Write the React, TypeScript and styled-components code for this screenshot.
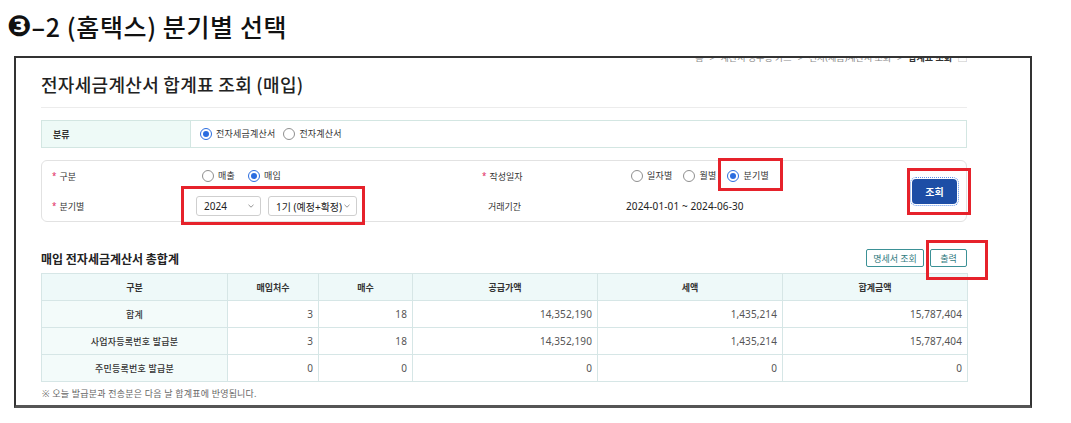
import React from 'react';
import styled, { createGlobalStyle } from 'styled-components';

const GlobalStyle = createGlobalStyle`
  html, body { margin: 0; padding: 0; background: #fff; }
  body { font-family: "Noto Sans", "Noto Sans CJK KR", sans-serif; color: #333; }
  * { box-sizing: border-box; }
`;

const Page = styled.div`
  width: 1071px;
  height: 423px;
  overflow: hidden;
  background: #fff;
  padding-top: 10px;
`;

const Heading = styled.h1`
  margin: 0 0 0 7px;
  height: 32px;
  font-size: 25px;
  line-height: 32px;
  font-weight: 500;
  color: #111;
  font-family: "Noto Sans CJK KR", sans-serif;
  letter-spacing: 0.6px;
  white-space: nowrap;
`;

const Badge = styled.span`
  display: inline-block;
  font-family: "DejaVu Sans", sans-serif;
  font-weight: 700;
  font-size: 29px;
  line-height: 32px;
  vertical-align: top;
  letter-spacing: 0;
`;

const Dash = styled.span`
  font-weight: 700;
`;

const Frame = styled.div`
  position: relative;
  margin: 14px 0 0 14px;
  width: 1018px;
  height: 352px;
  border: 2px solid #333;
  border-bottom: 3px solid #555;
  padding: 0 63px 0 25px;
`;

const Breadcrumb = styled.div`
  height: 5px;
  overflow: hidden;
  display: flex;
  justify-content: flex-end;
  align-items: flex-end;
  font-size: 9px;
  line-height: 11px;
  color: #8a8a8a;
  white-space: nowrap;
`;

const Crumb = styled.span<{ $current?: boolean }>`
  font-weight: ${p => (p.$current ? 700 : 400)};
  color: ${p => (p.$current ? '#333' : '#8a8a8a')};
  margin-left: 6px;
`;

const TitleRow = styled.div`
  height: 45px;
  display: flex;
  align-items: center;
  border-bottom: 1px solid #ececec;
  padding-bottom: 2px;
`;

const PageTitle = styled.h2`
  margin: 0;
  font-size: 18px;
  font-weight: 500;
  color: #222;
  letter-spacing: 0.3px;
  font-family: "Noto Sans CJK KR", sans-serif;
`;

const CategoryBox = styled.div`
  margin-top: 12px;
  height: 28px;
  display: flex;
  border: 1px solid #d3e6e2;
`;

const CategoryLabel = styled.div`
  width: 149px;
  background: #eefaf7;
  border-right: 1px solid #d3e6e2;
  display: flex;
  align-items: center;
  padding-left: 11px;
  font-size: 9px;
  font-weight: 600;
  color: #333;
`;

const CategoryValue = styled.div`
  flex: 1;
  display: flex;
  align-items: center;
  padding-left: 9px;
  gap: 8px;
`;

const RadioItem = styled.span`
  display: inline-flex;
  align-items: center;
  gap: 4px;
  font-size: 9px;
  color: #333;
  line-height: 12px;
  letter-spacing: 0.2px;
`;

const RadioCircle = styled.span<{ $on?: boolean }>`
  width: 12px;
  height: 12px;
  border-radius: 50%;
  border: 1px solid ${p => (p.$on ? '#2b6de0' : '#8f8f8f')};
  background: #fff;
  display: inline-flex;
  align-items: center;
  justify-content: center;
  flex: none;
  &::after {
    content: '';
    width: 6px;
    height: 6px;
    border-radius: 50%;
    background: ${p => (p.$on ? '#2b6de0' : 'transparent')};
  }
`;

const FilterBox = styled.div`
  margin-top: 12px;
  height: 62px;
  display: flex;
  border: 1px solid #e2e2e2;
  border-radius: 6px;
  background: #fff;
`;

const FieldGrid = styled.div`
  flex: 1;
  display: grid;
  grid-template-columns: 154px 286px 144px 1fr;
  grid-auto-rows: 30px;
  align-items: center;
`;

const FieldLabel = styled.div<{ $indent?: number }>`
  display: flex;
  align-items: center;
  padding-left: ${p => p.$indent ?? 0}px;
  font-size: 9px;
  color: #333;
`;

const Star = styled.span`
  color: #e0245e;
  font-size: 8px;
  margin-right: 3px;
  line-height: 8px;
`;

const RadioGroup = styled.div<{ $pad: number; $gap: number }>`
  display: flex;
  align-items: center;
  padding-left: ${p => p.$pad}px;
  gap: ${p => p.$gap}px;
`;

const SelectGroup = styled.div`
  position: relative;
  display: inline-flex;
  gap: 7px;
  justify-self: start;
`;

const Select = styled.div<{ $w: number }>`
  width: ${p => p.$w}px;
  height: 20px;
  border: 1px solid #cfcfcf;
  border-radius: 3px;
  background: #fff;
  display: flex;
  align-items: center;
  justify-content: space-between;
  padding: 0 6px 0 7px;
  font-size: 10px;
  color: #222;
  white-space: nowrap;
`;

const Chevron = () => (
  <svg width="6" height="4" viewBox="0 0 6 4" fill="none">
    <path d="M0.5 0.8 L3 3.2 L5.5 0.8" stroke="#888" strokeWidth="0.9" />
  </svg>
);

const PeriodText = styled.div`
  font-size: 10px;
  color: #222;
  letter-spacing: 0.1px;
`;

const Mark = styled.span`
  position: relative;
  display: inline-flex;
`;

const Highlight = styled.span<{ $t: number; $r: number; $b: number; $l: number }>`
  position: absolute;
  top: ${p => p.$t}px;
  right: ${p => p.$r}px;
  bottom: ${p => p.$b}px;
  left: ${p => p.$l}px;
  border: 3px solid #e6222b;
  pointer-events: none;
`;

const SearchArea = styled.div`
  display: flex;
  align-items: center;
  padding-right: 9px;
`;

const SearchButton = styled.button`
  width: 45px;
  height: 25px;
  border: none;
  border-radius: 4px;
  background: #1d4ea6;
  color: #fff;
  font-size: 10px;
  font-weight: 700;
  font-family: "Noto Sans CJK KR", sans-serif;
  outline: 1px dotted #5f93ea;
  outline-offset: 1px;
  padding: 0;
`;

const SectionHeader = styled.div`
  margin-top: 26px;
  height: 20px;
  display: flex;
  align-items: center;
  justify-content: space-between;
`;

const SectionTitle = styled.h3`
  margin: 0;
  font-size: 12px;
  font-weight: 700;
  color: #222;
  font-family: "Noto Sans CJK KR", sans-serif;
`;

const ButtonRow = styled.div`
  display: flex;
  gap: 6px;
`;

const SmallButton = styled.button<{ $w: number }>`
  width: ${p => p.$w}px;
  height: 18px;
  border: 1px solid #3b9196;
  border-radius: 2px;
  background: #fff;
  color: #2f7b80;
  font-size: 9px;
  font-family: "Noto Sans CJK KR", sans-serif;
  padding: 0;
`;

const Table = styled.table`
  margin-top: 5px;
  width: 926px;
  border-collapse: collapse;
  table-layout: fixed;
`;

const Th = styled.th`
  height: 27px;
  border: 1px solid #d6e6e6;
  background: #eef9f9;
  font-size: 9px;
  font-weight: 600;
  color: #333;
  padding: 0;
`;

const Td = styled.td<{ $label?: boolean }>`
  height: 27px;
  border: 1px solid #d6e6e6;
  background: ${p => (p.$label ? '#f3fbfa' : '#fff')};
  text-align: ${p => (p.$label ? 'center' : 'right')};
  font-size: ${p => (p.$label ? '9px' : '10px')};
  font-weight: ${p => (p.$label ? 500 : 400)};
  color: ${p => (p.$label ? '#333' : '#555')};
  letter-spacing: ${p => (p.$label ? '0.2px' : '0.1px')};
  padding: 0 ${p => (p.$label ? 0 : 5)}px 0 0;
`;

const Footnote = styled.p`
  margin: 3px 0 0 1px;
  line-height: 18px;
  font-size: 9px;
  color: #666;
  letter-spacing: 0.2px;
`;

const crumbs = ['홈', '>', '계산서·영수증·카드', '>', '전자(세금)계산서 조회', '>'];

const rows = [
  { label: '합계', vals: ['3', '18', '14,352,190', '1,435,214', '15,787,404'] },
  { label: '사업자등록번호 발급분', vals: ['3', '18', '14,352,190', '1,435,214', '15,787,404'] },
  { label: '주민등록번호 발급분', vals: ['0', '0', '0', '0', '0'] },
];

const cols = [186, 91, 94, 185, 185, 185];

export default function App() {
  return (
    <>
      <GlobalStyle />
      <Page>
        <Heading>
          <Badge>❸</Badge>
          <Dash>–</Dash>2 (홈택스) 분기별 선택
        </Heading>
        <Frame>
          <Breadcrumb>
            {crumbs.map((c, i) => (
              <Crumb key={i}>{c}</Crumb>
            ))}
            <Crumb $current>합계표 조회</Crumb>
            <Crumb>▢</Crumb>
          </Breadcrumb>
          <TitleRow>
            <PageTitle>전자세금계산서 합계표 조회 (매입)</PageTitle>
          </TitleRow>

          <CategoryBox>
            <CategoryLabel>분류</CategoryLabel>
            <CategoryValue>
              <RadioItem>
                <RadioCircle $on />
                전자세금계산서
              </RadioItem>
              <RadioItem>
                <RadioCircle />
                전자계산서
              </RadioItem>
            </CategoryValue>
          </CategoryBox>

          <FilterBox>
            <FieldGrid>
              <FieldLabel $indent={10}>
                <Star>*</Star>구분
              </FieldLabel>
              <RadioGroup $pad={6} $gap={13}>
                <RadioItem>
                  <RadioCircle />
                  매출
                </RadioItem>
                <RadioItem>
                  <RadioCircle $on />
                  매입
                </RadioItem>
              </RadioGroup>
              <FieldLabel>
                <Star>*</Star>작성일자
              </FieldLabel>
              <RadioGroup $pad={5} $gap={11}>
                <RadioItem>
                  <RadioCircle />
                  일자별
                </RadioItem>
                <RadioItem>
                  <RadioCircle />
                  월별
                </RadioItem>
                <Mark>
                  <RadioItem>
                    <RadioCircle $on />
                    분기별
                  </RadioItem>
                  <Highlight $t={-12} $r={-14} $b={-9} $l={-9} />
                </Mark>
              </RadioGroup>

              <FieldLabel $indent={10}>
                <Star>*</Star>분기별
              </FieldLabel>
              <SelectGroup>
                <Select $w={65}>
                  2024
                  <Chevron />
                </Select>
                <Select $w={89}>
                  1기 (예정+확정)
                  <Chevron />
                </Select>
                <Highlight $t={-10} $r={-8} $b={-9} $l={-15} />
              </SelectGroup>
              <FieldLabel $indent={6}>거래기간</FieldLabel>
              <PeriodText>2024-01-01 ~ 2024-06-30</PeriodText>
            </FieldGrid>
            <SearchArea>
              <Mark>
                <SearchButton>조회</SearchButton>
                <Highlight $t={-11} $r={-14} $b={-11} $l={-5} />
              </Mark>
            </SearchArea>
          </FilterBox>

          <SectionHeader>
            <SectionTitle>매입 전자세금계산서 총합계</SectionTitle>
            <ButtonRow>
              <SmallButton $w={58}>명세서 조회</SmallButton>
              <Mark>
                <SmallButton $w={37}>출력</SmallButton>
                <Highlight $t={-9} $r={-21} $b={-13} $l={-4} />
              </Mark>
            </ButtonRow>
          </SectionHeader>

          <Table>
            <colgroup>
              {cols.map((w, i) => (
                <col key={i} style={{ width: w }} />
              ))}
            </colgroup>
            <thead>
              <tr>
                <Th>구분</Th>
                <Th>매입처수</Th>
                <Th>매수</Th>
                <Th>공급가액</Th>
                <Th>세액</Th>
                <Th>합계금액</Th>
              </tr>
            </thead>
            <tbody>
              {rows.map(r => (
                <tr key={r.label}>
                  <Td $label>{r.label}</Td>
                  {r.vals.map((v, i) => (
                    <Td key={i}>{v}</Td>
                  ))}
                </tr>
              ))}
            </tbody>
          </Table>
          <Footnote>※ 오늘 발급분과 전송분은 다음 날 합계표에 반영됩니다.</Footnote>
        </Frame>
      </Page>
    </>
  );
}
